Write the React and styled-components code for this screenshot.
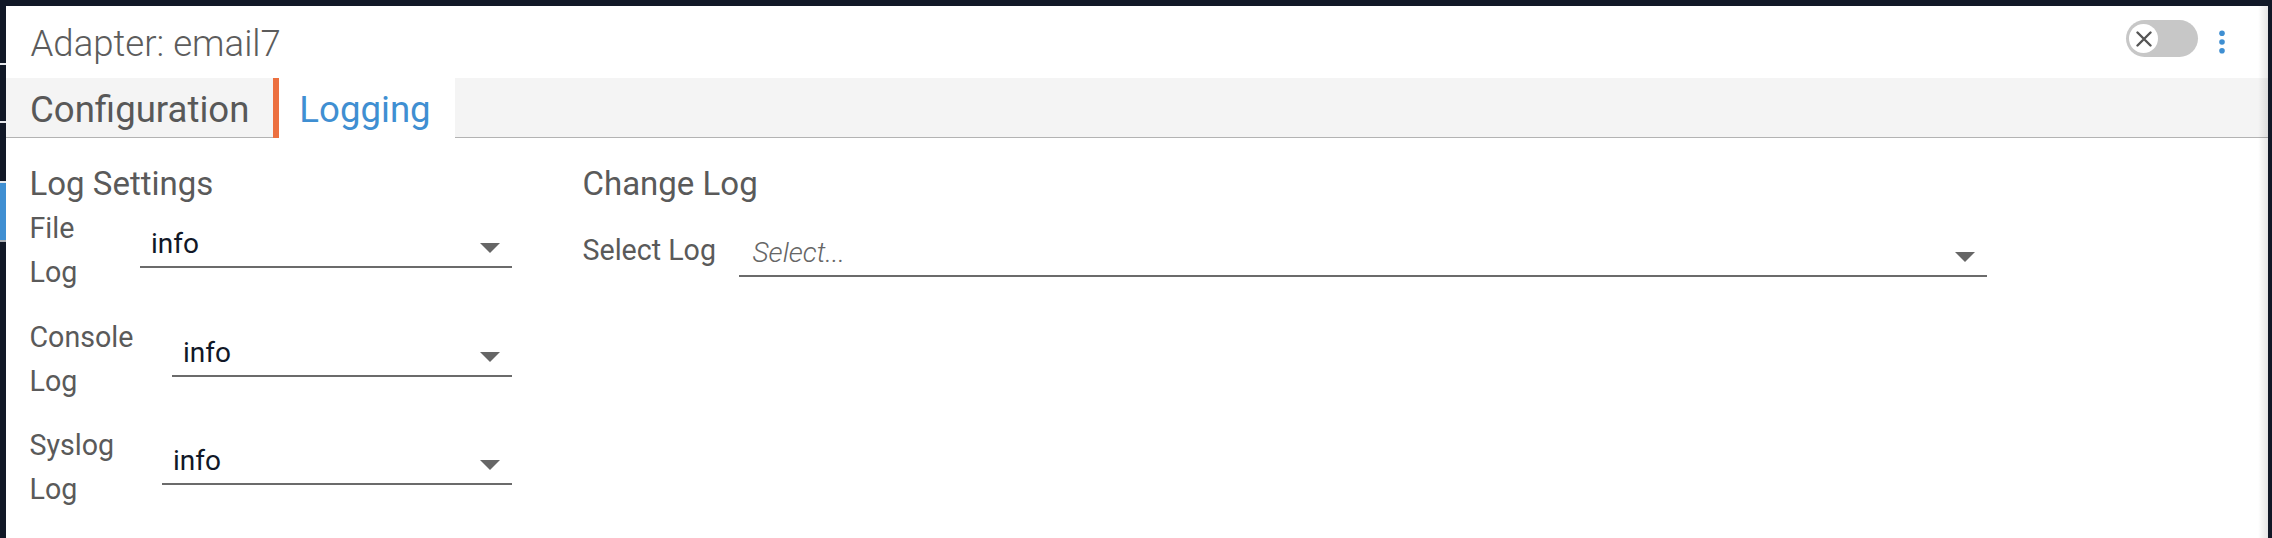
import React from 'react';
import styled, { createGlobalStyle } from 'styled-components';

const GlobalStyle = createGlobalStyle`
  html, body { margin: 0; padding: 0; background: #111827; }
  body { font-family: Roboto, "Noto Sans", sans-serif; overflow: hidden; }
  * { box-sizing: border-box; }
`;

const Screen = styled.div`
  display: flex;
  height: 538px;
  padding-top: 6px;
  background: #111827;
  overflow: hidden;
`;

const SideStrip = styled.div`
  flex: 0 0 6px;
  display: flex;
  flex-direction: column;
`;

const StripGap = styled.div`
  height: ${p => p.$h}px;
`;

const StripLine = styled.div`
  height: 2px;
  background: ${p => p.$color};
`;

const StripActive = styled.div`
  height: 57px;
  background: #3f8fd2;
`;

const Dialog = styled.div`
  flex: 0 0 2262px;
  position: relative;
  display: flex;
  flex-direction: column;
  background: #ffffff;
  &::after {
    content: '';
    position: absolute;
    top: 0;
    right: 0;
    bottom: 0;
    width: 10px;
    pointer-events: none;
    background: linear-gradient(to right, rgba(0, 0, 0, 0), rgba(0, 0, 0, 0.1));
  }
`;

const Header = styled.div`
  height: 72px;
  display: flex;
  justify-content: space-between;
  align-items: flex-start;
  padding: 0 40px 0 24.5px;
`;

const Title = styled.div`
  padding-top: 17px;
  font-weight: 300;
  font-size: 36.6px;
  line-height: 42px;
  color: #5c5c5c;
`;

const Controls = styled.div`
  display: flex;
  align-items: flex-start;
  gap: 18px;
  padding-top: 14px;
`;

const Toggle = styled.div`
  width: 72px;
  height: 37px;
  border-radius: 18.5px;
  background: #c7c7c7;
  display: flex;
  align-items: center;
  padding-left: 3px;
`;

const Knob = styled.div`
  width: 29px;
  height: 29px;
  border-radius: 50%;
  background: #ffffff;
  display: flex;
  align-items: center;
  justify-content: center;
`;

const Kebab = styled.svg`
  margin-top: 10px;
  display: block;
`;

const TabBar = styled.div`
  display: flex;
  height: 60px;
  background: #f4f4f4;
  border-bottom: 1px solid #b3b3b3;
`;

const Tab = styled.div`
  height: ${p => (p.$active ? 60 : 59)}px;
  margin-bottom: ${p => (p.$active ? -1 : 0)}px;
  padding: 11px 24px 0 ${p => (p.$active ? 20 : 24)}px;
  font-size: 36.6px;
  line-height: 42px;
  color: ${p => (p.$active ? '#3f8fd2' : '#585858')};
  background: ${p => (p.$active ? '#ffffff' : 'transparent')};
  border-left: ${p => (p.$active ? '6px solid #ec6f3f' : 'none')};
`;

const Content = styled.div`
  display: flex;
  align-items: flex-start;
  gap: 70.5px;
  padding: 27px 0 0 23.5px;
`;

const Column = styled.div`
  flex: 0 0 ${p => p.$width}px;
  display: flex;
  flex-direction: column;
`;

const SectionTitle = styled.div`
  font-size: ${p => p.$size}px;
  line-height: 38px;
  color: #5a5a5a;
  margin-bottom: ${p => p.$mb}px;
`;

const FieldRow = styled.div`
  display: grid;
  grid-template-columns: ${p => p.$labelWidth}px 1fr;
  align-items: start;
  margin-bottom: 20.5px;
`;

const Label = styled.div`
  width: ${p => (p.$nowrap ? 'auto' : 'min-content')};
  white-space: ${p => (p.$nowrap ? 'nowrap' : 'normal')};
  font-size: 28.6px;
  line-height: 44px;
  color: #5a5a5a;
`;

const SelectBox = styled.div`
  display: flex;
  align-items: flex-start;
  margin-top: ${p => p.$offset}px;
  height: 39px;
  padding-left: 11px;
  border-bottom: 2px solid #6b6b6b;
`;

const Value = styled.span`
  flex: 1;
  font-size: 28px;
  line-height: 30px;
  color: #111827;
`;

const Placeholder = styled.span`
  flex: 1;
  padding-left: 3px;
  font-style: italic;
  font-weight: 300;
  font-size: 28px;
  line-height: 30px;
  color: #666666;
`;

const Arrow = styled.svg`
  display: block;
  flex: none;
  margin: 14px 12px 0 0;
`;

const DropArrow = () => (
  <Arrow width="20" height="10" viewBox="0 0 20 10">
    <path d="M0 0 L20 0 L10 10 Z" fill="#666666" />
  </Arrow>
);

const Select = ({ value, placeholder, offset }) => (
  <SelectBox $offset={offset}>
    {value ? <Value>{value}</Value> : <Placeholder>{placeholder}</Placeholder>}
    <DropArrow />
  </SelectBox>
);

const logRows = [
  { label: 'File Log', width: 110.5 },
  { label: 'Console Log', width: 142.5 },
  { label: 'Syslog Log', width: 132.5 },
];

export default function App() {
  return (
    <>
      <GlobalStyle />
      <Screen>
        <SideStrip>
          <StripGap $h={57} />
          <StripLine $color="#e5e7eb" />
          <StripGap $h={56} />
          <StripLine $color="#e5e7eb" />
          <StripGap $h={58} />
          <StripLine $color="#e5e7eb" />
          <StripActive />
          <StripLine $color="#a9adb3" />
        </SideStrip>
        <Dialog>
          <Header>
            <Title>Adapter: email7</Title>
            <Controls>
              <Toggle>
                <Knob>
                  <svg width="16" height="16" viewBox="0 0 16 16">
                    <path d="M1.5 1.5 L14.5 14.5 M14.5 1.5 L1.5 14.5" stroke="#555555" strokeWidth="2.4" strokeLinecap="round" />
                  </svg>
                </Knob>
              </Toggle>
              <Kebab width="12" height="26" viewBox="0 0 12 26">
                <circle cx="6" cy="3.3" r="2.8" fill="#3f8fd2" />
                <circle cx="6" cy="12" r="2.8" fill="#3f8fd2" />
                <circle cx="6" cy="20.7" r="2.8" fill="#3f8fd2" />
              </Kebab>
            </Controls>
          </Header>
          <TabBar>
            <Tab>Configuration</Tab>
            <Tab $active>Logging</Tab>
          </TabBar>
          <Content>
            <Column $width={482.5}>
              <SectionTitle $size={33} $mb={3}>Log Settings</SectionTitle>
              {logRows.map(r => (
                <FieldRow key={r.label} $labelWidth={r.width}>
                  <Label>{r.label}</Label>
                  <Select value="info" offset={23} />
                </FieldRow>
              ))}
            </Column>
            <Column $width={1404}>
              <SectionTitle $size={33} $mb={25}>Change Log</SectionTitle>
              <FieldRow $labelWidth={156}>
                <Label $nowrap>Select Log</Label>
                <Select placeholder="Select..." offset={10} />
              </FieldRow>
            </Column>
          </Content>
        </Dialog>
      </Screen>
    </>
  );
}
